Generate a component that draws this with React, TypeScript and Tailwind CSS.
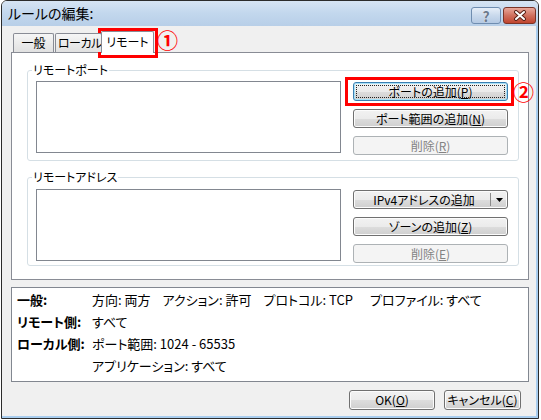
import React from "react";

const font = "font-['Noto_Sans_CJK_JP',sans-serif] [font-feature-settings:'palt']";

function Btn({
  children,
  className = "",
  disabled = false,
  focused = false,
}: {
  children: React.ReactNode;
  className?: string;
  disabled?: boolean;
  focused?: boolean;
}) {
  if (disabled) {
    return (
      <div
        className={`flex items-center justify-center rounded-[3px] border border-[#adb2b5] bg-[#f4f4f4] text-[12px] text-[#838383] ${className}`}
      >
        {children}
      </div>
    );
  }
  if (focused) {
    return (
      <div
        className={`rounded-[3px] border border-[#3c7fb1] p-[2px] shadow-[inset_0_0_0_1px_#a6e1f8] bg-[linear-gradient(#f2f2f2_0%,#ebebeb_50%,#dddddd_51%,#cfcfcf_100%)] text-[12px] text-black ${className}`}
      >
        <div className="flex h-full w-full items-center justify-center border border-dotted border-[#222]">
          {children}
        </div>
      </div>
    );
  }
  return (
    <div
      className={`flex items-center justify-center rounded-[3px] border border-[#707070] bg-[linear-gradient(#f2f2f2_0%,#ebebeb_50%,#dddddd_51%,#cfcfcf_100%)] text-[12px] text-black shadow-[inset_0_0_0_1px_#fcfcfc] ${className}`}
    >
      {children}
    </div>
  );
}

function Group({
  title,
  height,
  listTop,
  className = "",
  children,
}: {
  title: string;
  height: string;
  listTop: string;
  className?: string;
  children: React.ReactNode;
}) {
  return (
    <fieldset
      className={`ml-[15px] w-[492px] rounded-[3px] border border-[#d5dfe5] ${height} ${className}`}
    >
      <legend className="ml-[4px] px-[1px] text-[12px] leading-[14px] text-black">
        {title}
      </legend>
      <div className={`ml-[8px] flex ${listTop}`}>
        <div className="h-[72px] w-[305px] border border-[#828790] bg-white" />
        <div className="ml-[12px] mt-[1px] flex w-[155px] flex-col gap-[8px]">
          {children}
        </div>
      </div>
    </fieldset>
  );
}

export default function App() {
  return (
    <div className={`relative h-[420px] w-[541px] bg-white pl-px ${font}`}>
      {/* window */}
      <div className="flex h-[419px] w-[538px] flex-col overflow-hidden rounded-t-[6px] border border-[#2b2b2b]">
        {/* title bar */}
        <div className="flex h-[25px] shrink-0 items-start bg-gradient-to-b from-[#d6e4f3] via-[#c2d7ed] to-[#b8cfe8]">
          <span className="ml-[6px] mt-[3px] text-[14px] leading-[18px] text-black">
            ルールの編集:
          </span>
          <div className="ml-auto mr-[2px] mt-[6px] flex gap-[2px]">
            <div className="flex h-[17px] w-[30px] items-center justify-center rounded-[3px] border border-[#6f8db0] bg-gradient-to-b from-[#e6eef8] via-[#c9d9ec] to-[#b4c9e3] text-[14px] font-bold leading-none text-[#6b7a8c] [text-shadow:0_0_1px_#fff]">
              ?
            </div>
            <div className="flex h-[17px] w-[33px] items-center justify-center rounded-[3px] border border-[#7a3427] bg-gradient-to-b from-[#e8a89b] via-[#d0705e] to-[#c0432d]">
              <svg width="14" height="11" viewBox="0 0 14 11">
                <path d="M3 2 L11 9 M11 2 L3 9" stroke="#5a2218" strokeWidth="4" strokeLinecap="round" />
                <path d="M3 2 L11 9 M11 2 L3 9" stroke="#fff" strokeWidth="2" strokeLinecap="round" />
              </svg>
            </div>
          </div>
        </div>

        {/* body */}
        <div className="flex flex-1 flex-col border-b-2 border-r-2 border-[#a9cdee] bg-[#f0f0f0]">
          {/* tabs */}
          <div className="relative z-10 ml-[11px] mt-[5px] flex h-[21px] items-end text-[12px] text-black">
            <div className="flex h-[19px] w-[41px] items-center justify-center rounded-t-[2px] border border-b-0 border-[#898c95] bg-gradient-to-b from-[#f6f6f6] to-[#e1e1e1]">
              一般
            </div>
            <div className="ml-[1px] flex h-[19px] w-[47px] items-center whitespace-nowrap rounded-t-[2px] border border-b-0 border-[#898c95] bg-gradient-to-b from-[#f6f6f6] to-[#e1e1e1] pl-[2px] tracking-[-0.5px]">
              ローカル
            </div>
            <div className="-mb-px -ml-[1px] flex h-[22px] w-[53px] items-center justify-center rounded-t-[2px] border border-b-0 border-[#898c95] bg-white pb-[1px]">
              リモート
            </div>
          </div>

          {/* panel */}
          <div className="ml-[9px] h-[228px] w-[518px] border border-[#898c95] bg-white pt-[10px]">
            <Group title="リモートポート" height="h-[98px]" listTop="mt-[4px]">
              <Btn focused className="h-[19px]">
                <span>
                  ポートの追加(<u>P</u>)
                </span>
              </Btn>
              <Btn className="h-[19px]">
                <span>
                  ポート範囲の追加(<u>N</u>)
                </span>
              </Btn>
              <Btn disabled className="h-[19px]">
                <span>
                  削除(<u>R</u>)
                </span>
              </Btn>
            </Group>
            <Group title="リモートアドレス" height="h-[96px]" listTop="mt-[5px]" className="mt-[9px]">
              <div className="flex h-[19px] rounded-[3px] border border-[#707070] bg-[linear-gradient(#f2f2f2_0%,#ebebeb_50%,#dddddd_51%,#cfcfcf_100%)] text-[12px] text-black shadow-[inset_0_0_0_1px_#fcfcfc]">
                <div className="flex flex-1 items-center justify-center pl-[4px]">IPv4アドレスの追加</div>
                <div className="my-[2px] w-px bg-[#8a8a8a]" />
                <div className="flex w-[16px] items-center justify-center">
                  <svg width="7" height="4" viewBox="0 0 7 4">
                    <path d="M0 0 H7 L3.5 4 Z" fill="#000" />
                  </svg>
                </div>
              </div>
              <Btn className="h-[19px]">
                <span>
                  ゾーンの追加(<u>Z</u>)
                </span>
              </Btn>
              <Btn disabled className="h-[19px]">
                <span>
                  削除(<u>E</u>)
                </span>
              </Btn>
            </Group>
          </div>

          {/* summary */}
          <div className="ml-[9px] mt-[7px] h-[95px] w-[518px] border border-[#828790] bg-white pl-[5px] pt-[1px] text-[13px] leading-[22px] text-black">
            <div className="flex">
              <span className="w-[75px] font-bold">一般:</span>
              <span>方向: 両方</span>
              <span className="ml-[12px]">アクション: 許可</span>
              <span className="ml-[12px]">プロトコル: TCP</span>
              <span className="ml-[17px]">プロファイル: すべて</span>
            </div>
            <div className="flex">
              <span className="w-[75px] font-bold">リモート側:</span>
              <span>すべて</span>
            </div>
            <div className="flex">
              <span className="w-[75px] font-bold">ローカル側:</span>
              <span>ポート範囲: 1024 - 65535</span>
            </div>
            <div className="flex">
              <span className="w-[75px]" />
              <span>アプリケーション: すべて</span>
            </div>
          </div>

          {/* dialog buttons */}
          <div className="ml-[347px] mt-[8px] flex gap-[9px]">
            <Btn className="h-[20px] w-[86px]">
              <span>
                OK(<u>O</u>)
              </span>
            </Btn>
            <Btn className="h-[20px] w-[77px]">
              <span>
                キャンセル(<u>C</u>)
              </span>
            </Btn>
          </div>
        </div>
      </div>

      {/* annotations */}
      <div className="absolute left-[98px] top-[28px] h-[30px] w-[60px] border-[3px] border-[#ff0000]" />
      <div className="absolute left-[157px] top-[27px] text-[21px] font-bold leading-[24px] text-[#ff0000]">①</div>
      <div className="absolute left-[345px] top-[77px] h-[29px] w-[169px] border-[3px] border-[#ff0000]" />
      <div className="absolute left-[513px] top-[79px] text-[21px] font-bold leading-[24px] text-[#ff0000]">②</div>
    </div>
  );
}
